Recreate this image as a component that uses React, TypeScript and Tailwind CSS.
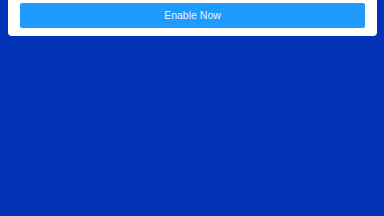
export default function App() {
  return (
    <div className="h-[216px] w-[384px] overflow-hidden bg-[#0233b6] font-['Liberation_Sans',Arial,sans-serif]">
      <div className="mx-[8px] w-[369px] rounded-b-[4px] bg-white px-[12px] pb-[8px] pt-[3px]">
        <button className="flex h-[25px] w-full items-center justify-center rounded-[2px] bg-[#1f9bfd] text-[10.5px] text-[#e6f4ff]">
          Enable Now
        </button>
      </div>
    </div>
  );
}
